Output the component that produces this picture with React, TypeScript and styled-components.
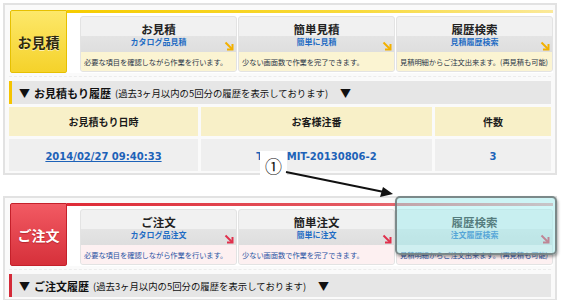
import styled, { createGlobalStyle } from 'styled-components';

type Tone = 'yellow' | 'red';

const tones = {
  yellow: {
    label: 'linear-gradient(#fde86a, #f5d22a)',
    labelBorder: '#e6c000',
    labelText: '#2e2a10',
    labelShadow: '0 1px 0 rgba(255,255,255,0.6)',
    line: 'linear-gradient(to right, #f6cc00, #f8da3c 60%, #fbe99a)',
    arrow: '#f2b000',
    desc: '#fbf4d2',
    descText: '#2b3648',
    bar: '#f5c400',
  },
  red: {
    label: 'linear-gradient(#f25a63, #d6303a)',
    labelBorder: '#c4202a',
    labelText: '#ffffff',
    labelShadow: '0 1px 1px rgba(120,0,0,0.4)',
    line: 'linear-gradient(to right, #de2a36, #e45a62 60%, #eea4a8)',
    arrow: '#e0304c',
    desc: '#fdf0f1',
    descText: '#2c55a4',
    bar: '#d42a38',
  },
};

const GlobalStyle = createGlobalStyle`
  body {
    margin: 0;
    background: #ffffff;
    font-family: "Noto Sans CJK JP", "Noto Sans", sans-serif;
    color: #222;
  }
`;

const Page = styled.div`
  position: relative;
  width: 562px;
  height: 300px;
  overflow: hidden;
  padding-top: 3px;
  box-sizing: border-box;
`;

const Panel = styled.section`
  margin: 0 5px 21px 3px;
  border: 2px solid #e2e2e2;
  padding: 5px 4px 2px 4px;
  background: #fafafa;
`;

const MenuRow = styled.div`
  display: flex;
  height: 63px;
  margin: 0 -2px 0 1px;
`;

const Label = styled.div<{ $tone: Tone }>`
  width: 57px;
  flex: none;
  box-sizing: border-box;
  display: flex;
  align-items: center;
  justify-content: center;
  background: ${(p) => tones[p.$tone].label};
  border: 1px solid ${(p) => tones[p.$tone].labelBorder};
  border-radius: 2px 0 2px 2px;
  color: ${(p) => tones[p.$tone].labelText};
  text-shadow: ${(p) => tones[p.$tone].labelShadow};
  font-size: 14px;
  font-weight: 700;
`;

const MenuBody = styled.div`
  flex: 1;
  display: flex;
  flex-direction: column;
  background: #ffffff;
`;

const TopLine = styled.div<{ $tone: Tone }>`
  height: 3px;
  background: ${(p) => tones[p.$tone].line};
`;

const Cards = styled.div`
  display: grid;
  grid-template-columns: repeat(3, 1fr);
  gap: 1px;
  margin: 3px 0 0 13px;
`;

const Card = styled.div`
  border: 1px solid #e3e3e3;
  border-radius: 3px;
  overflow: hidden;
  display: flex;
  flex-direction: column;
  background: #f1f1f1;
`;

const CardHead = styled.div`
  height: 19px;
  display: flex;
  align-items: flex-end;
  justify-content: center;
  font-size: 11.5px;
  font-weight: 700;
  line-height: 14px;
  color: #222;
`;

const CardBand = styled.div`
  height: 16px;
  display: grid;
  grid-template-columns: 1fr auto 1fr;
  background: linear-gradient(#e4e4e4, #dedede);
`;

const CardSub = styled.span`
  grid-column: 2;
  font-size: 8px;
  font-weight: 700;
  line-height: 11px;
  color: #1f6cc4;
`;

const ArrowBox = styled.span`
  grid-column: 3;
  justify-self: end;
  align-self: end;
  display: flex;
  margin: 0 2px 1px 0;
`;

const CardDesc = styled.div<{ $tone: Tone }>`
  height: 19px;
  display: flex;
  align-items: center;
  padding-left: 3px;
  background: ${(p) => tones[p.$tone].desc};
  color: ${(p) => tones[p.$tone].descText};
  font-size: 7.3px;
  letter-spacing: -0.1px;
  white-space: nowrap;
`;

const Divider = styled.div`
  margin: 3px 0 4px;
  border-top: 1px dashed #ececec;
`;

const HistoryHead = styled.div<{ $tone: Tone }>`
  height: 23px;
  display: flex;
  align-items: center;
  gap: 4px;
  padding-left: 7px;
  background: #e6e6e6;
  border-left: 3px solid ${(p) => tones[p.$tone].bar};
  font-size: 11px;
  font-weight: 700;
  color: #111;
  white-space: nowrap;
`;

const HistoryNote = styled.span`
  font-size: 9.4px;
  font-weight: 400;
  margin-right: 8px;
`;

const Table = styled.div`
  display: grid;
  grid-template-columns: 189px 231px 1fr;
  grid-template-rows: 29px 32px;
  gap: 3px;
  margin-top: 3px;
`;

const HeadCell = styled.div`
  display: flex;
  align-items: center;
  justify-content: center;
  background: #f8f0c8;
  font-size: 10px;
  font-weight: 700;
  color: #1a1a1a;
`;

const DataCell = styled.div`
  display: flex;
  align-items: center;
  justify-content: center;
  padding-top: 2px;
  background: #efefef;
  font-family: "DejaVu Sans", sans-serif;
  font-size: 10px;
  font-weight: 700;
  color: #1d62b8;
`;

const DateLink = styled.a`
  color: #1d62b8;
  text-decoration: underline;
`;

const Highlight = styled.div`
  position: absolute;
  z-index: 2;
  left: 395px;
  top: 196px;
  width: 162px;
  height: 59px;
  box-sizing: border-box;
  border: 2px solid rgba(110, 120, 120, 0.85);
  border-radius: 5px;
  background: rgba(150, 238, 240, 0.45);
  box-shadow: 1px 2px 3px rgba(0, 0, 0, 0.35);
`;

const Marker = styled.div`
  position: absolute;
  z-index: 2;
  left: 260px;
  top: 151px;
  width: 27px;
  height: 26px;
  background: #ffffff;
  display: flex;
  align-items: center;
  justify-content: center;
  padding-top: 3px;
  box-sizing: border-box;
  font-family: "Noto Sans CJK JP", sans-serif;
  font-size: 17px;
  line-height: 1;
  color: #111;
`;

const Pointer = styled.svg`
  position: absolute;
  z-index: 3;
  left: 280px;
  top: 166px;
`;

const CornerArrow = ({ color }: { color: string }) => (
  <svg width="10" height="10" viewBox="0 0 10 10">
    <path d="M1.5 1.5 L8 8" stroke={color} strokeWidth="2" fill="none" />
    <path d="M8.5 3 V8.5 H3" stroke={color} strokeWidth="2" fill="none" />
  </svg>
);

const menus = {
  yellow: {
    label: 'お見積',
    cards: [
      { title: 'お見積', sub: 'カタログ品見積', desc: '必要な項目を確認しながら作業を行います。' },
      { title: '簡単見積', sub: '簡単に見積', desc: '少ない画面数で作業を完了できます。' },
      { title: '履歴検索', sub: '見積履歴検索', desc: '見積明細からご注文出来ます。(再見積も可能)' },
    ],
    history: 'お見積もり履歴',
    cols: ['お見積もり日時', 'お客様注番', '件数'],
  },
  red: {
    label: 'ご注文',
    cards: [
      { title: 'ご注文', sub: 'カタログ品注文', desc: '必要な項目を確認しながら作業を行います。' },
      { title: '簡単注文', sub: '簡単に注文', desc: '少ない画面数で作業を完了できます。' },
      { title: '履歴検索', sub: '注文履歴検索', desc: '見積明細からご注文出来ます。(再見積も可能)' },
    ],
    history: 'ご注文履歴',
    cols: ['ご注文日時', 'お客様注番', '件数'],
  },
};

const Section = ({ tone, rows }: { tone: Tone; rows?: string[] }) => {
  const m = menus[tone];
  return (
    <Panel>
      <MenuRow>
        <Label $tone={tone}>{m.label}</Label>
        <MenuBody>
          <TopLine $tone={tone} />
          <Cards>
            {m.cards.map((c) => (
              <Card key={c.title + c.sub}>
                <CardHead>{c.title}</CardHead>
                <CardBand>
                  <CardSub>{c.sub}</CardSub>
                  <ArrowBox>
                    <CornerArrow color={tones[tone].arrow} />
                  </ArrowBox>
                </CardBand>
                <CardDesc $tone={tone}>{c.desc}</CardDesc>
              </Card>
            ))}
          </Cards>
        </MenuBody>
      </MenuRow>
      <Divider />
      <HistoryHead $tone={tone}>
        <span>▼</span>
        <span>{m.history}</span>
        <HistoryNote>(過去3ヶ月以内の5回分の履歴を表示しております)</HistoryNote>
        <span>▼</span>
      </HistoryHead>
      {rows && (
        <Table>
          {m.cols.map((c) => (
            <HeadCell key={c}>{c}</HeadCell>
          ))}
          <DataCell>
            <DateLink>{rows[0]}</DateLink>
          </DataCell>
          <DataCell>{rows[1]}</DataCell>
          <DataCell>{rows[2]}</DataCell>
        </Table>
      )}
    </Panel>
  );
};

export default function App() {
  return (
    <Page>
      <GlobalStyle />
      <Section tone="yellow" rows={['2014/02/27 09:40:33', 'TOYOMIT-20130806-2', '3']} />
      <Section tone="red" />
      <Highlight />
      <Marker>①</Marker>
      <Pointer width="120" height="36" viewBox="0 0 120 36">
        <line x1="6" y1="6" x2="104" y2="26" stroke="#111" strokeWidth="2" />
        <path d="M113 28 L100 31 L103 21 Z" fill="#111" />
      </Pointer>
    </Page>
  );
}
